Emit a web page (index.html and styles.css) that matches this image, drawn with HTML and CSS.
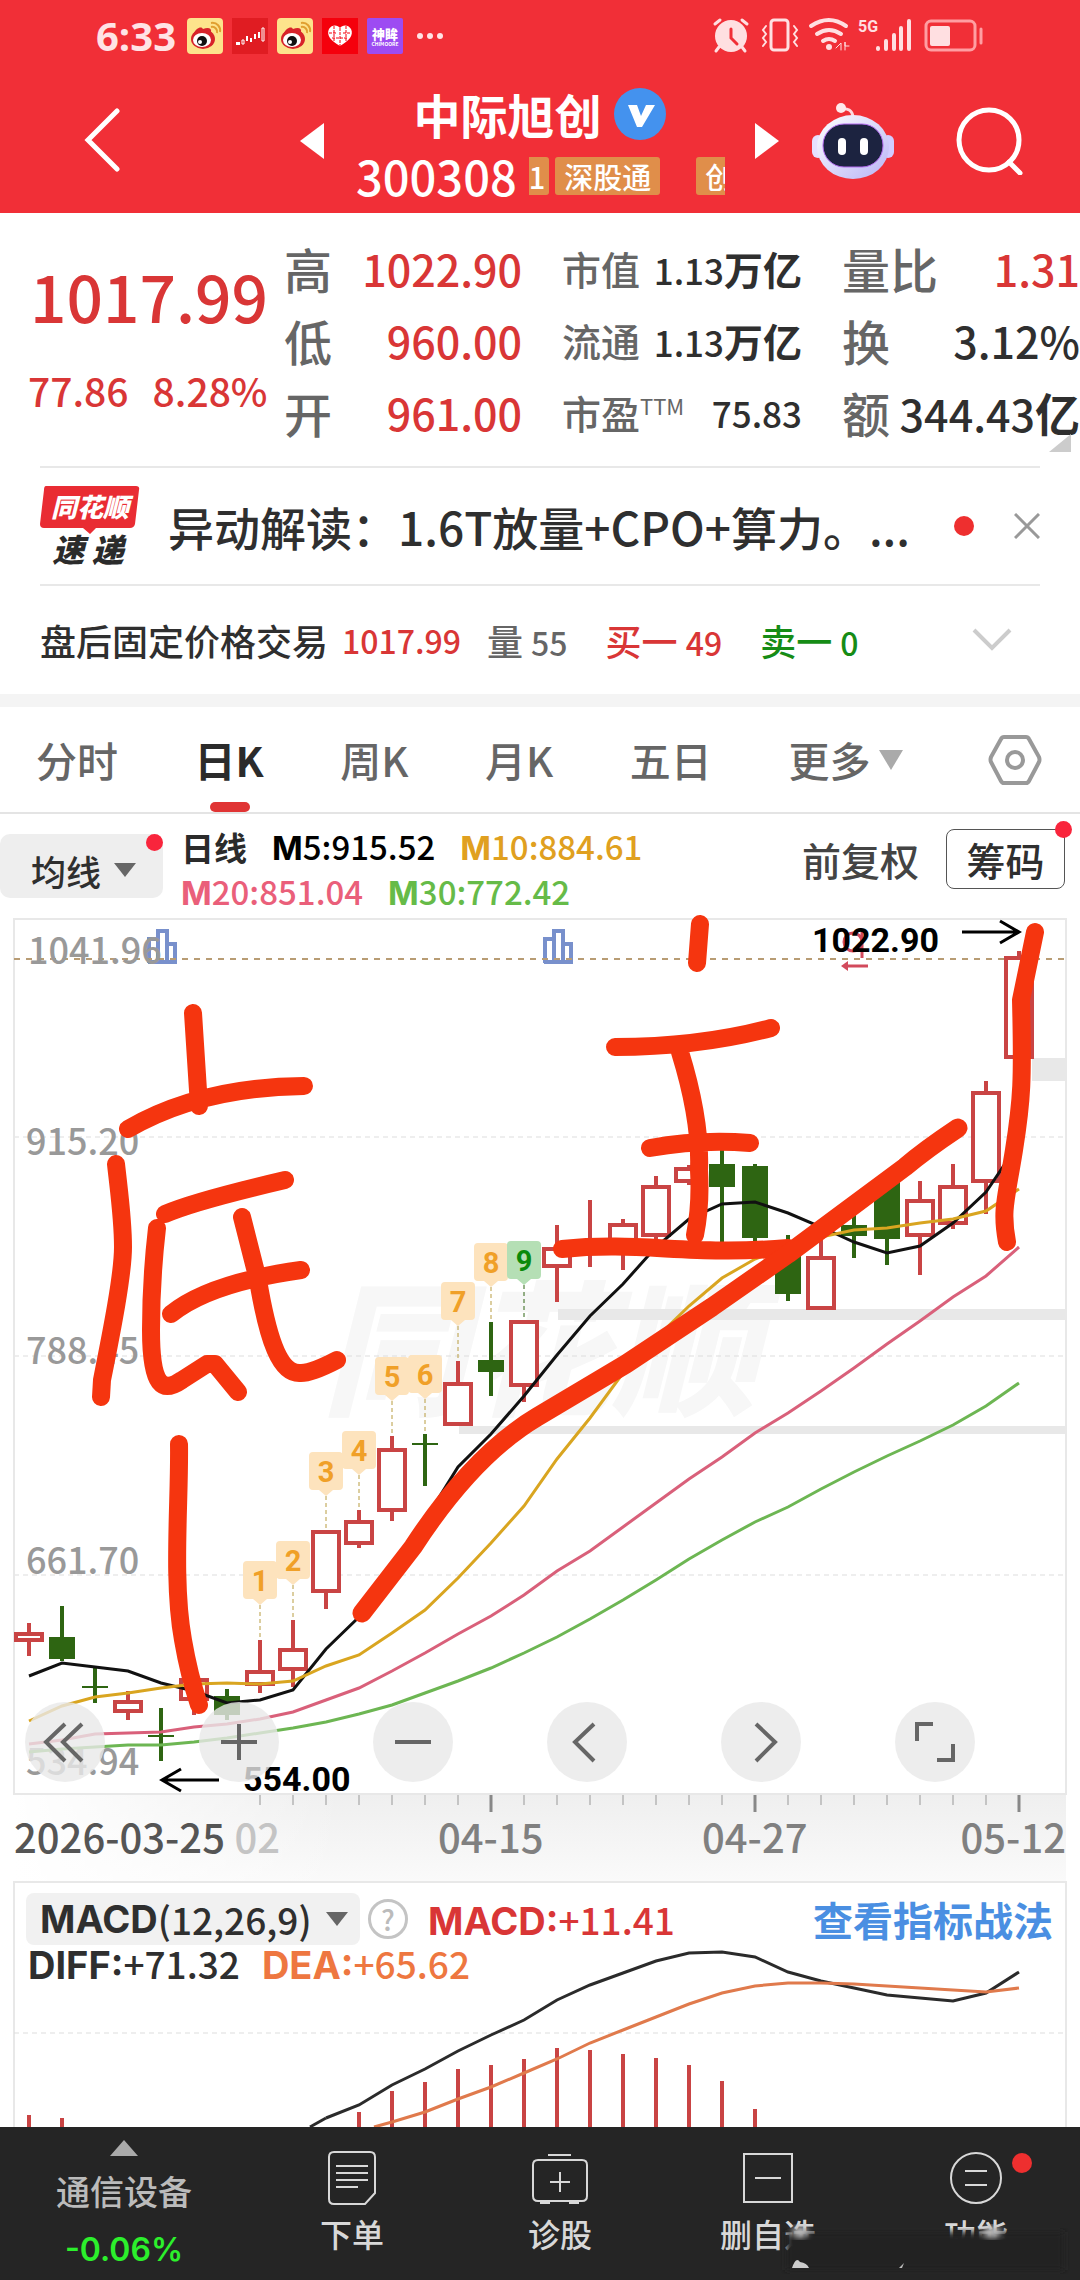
FILE: index.html
```html
<!DOCTYPE html>
<html lang="zh-CN">
<head>
<meta charset="utf-8">
<meta name="viewport" content="width=device-width, initial-scale=1">
<title>中际旭创 300308</title>
<link rel="stylesheet" href="styles.css">
</head>
<body>
<header class="top">
  <div class="status">
    <span class="clock">6:33</span>
    <div class="apps">
      <svg class="app" viewBox="0 0 36 36"><rect width="36" height="36" rx="4" fill="#fde38c"/><ellipse cx="16" cy="21" rx="12" ry="10" fill="#d8232a"/><path d="M6 17c3-8 9-9 10-6 5-2 9-1 8 3" fill="#d8232a"/><ellipse cx="15" cy="22" rx="9" ry="7" fill="#fff"/><circle cx="15" cy="23" r="5" fill="#111"/><circle cx="13" cy="24" r="2" fill="#fff"/><path d="M24 9c4-1 7 3 6 6M24 5c6-1 10 4 9 9" fill="none" stroke="#e0a030" stroke-width="2"/></svg>
      <svg class="app" viewBox="0 0 36 36"><rect width="36" height="36" fill="#e01c22"/><path d="M4 24h4v3H4zM14 18h2v5h-2zM18 20h2v4h-2zM22 16h2v5h-2zM26 14h2v6h-2z" fill="#fff"/><path d="M10 22h2v4h-2zM30 10h2v13h-2z" fill="none" stroke="#fff"/></svg>
      <svg class="app" viewBox="0 0 36 36"><rect width="36" height="36" rx="4" fill="#fde38c"/><ellipse cx="16" cy="21" rx="12" ry="10" fill="#d8232a"/><path d="M6 17c3-8 9-9 10-6 5-2 9-1 8 3" fill="#d8232a"/><ellipse cx="15" cy="22" rx="9" ry="7" fill="#fff"/><circle cx="15" cy="23" r="5" fill="#111"/><circle cx="13" cy="24" r="2" fill="#fff"/><path d="M24 9c4-1 7 3 6 6M24 5c6-1 10 4 9 9" fill="none" stroke="#e0a030" stroke-width="2"/></svg>
      <svg class="app" viewBox="0 0 36 36"><rect width="36" height="36" fill="#f5000c"/><path d="M18 28C9 23 4 17 7 11c3-5 9-4 11-1 2-3 8-4 11 1 3 6-2 12-11 17z" fill="#fff"/><path d="M18 10v18M12 8v15M24 8v15M7 15h8M21 15h8M10 20h16" stroke="#f5000c" stroke-width="1" stroke-dasharray="3 1"/></svg>
      <svg class="app" viewBox="0 0 36 36"><rect width="36" height="36" rx="2" fill="#9d4bf2"/><text x="18" y="21" text-anchor="middle" font-size="13" font-weight="900" fill="#fff">神眸</text><text x="18" y="28" text-anchor="middle" font-size="5" font-weight="700" fill="#fff">CHIMOORE</text></svg>
    </div>
    <svg class="dots" viewBox="0 0 26 6"><circle cx="3" cy="3" r="3"/><circle cx="13" cy="3" r="3"/><circle cx="23" cy="3" r="3"/></svg>
    <svg class="signals" viewBox="713 18 272 38" fill="none" stroke="#ffdfe1" stroke-width="3" stroke-linecap="round">
      <circle cx="731" cy="37" r="16" fill="#ffdfe1" stroke="none"/><path d="M731 30v9l6 6" stroke="#f12f37"/><path d="M715 25l5-4M742 21l5 4M719 48l-3 4M742 48l3 4"/>
      <rect x="771" y="21" width="17" height="30" rx="3"/><path d="M766 27l-3 4 3 4-3 4 3 4-3 4M794 27l3 4-3 4 3 4-3 4 3 4" stroke-width="2"/>
      <path d="M811 27q18-12 35 0M817 35q12-8 24 0M823 42q6-4 12 0" stroke-width="4"/><circle cx="829" cy="48" r="3" fill="#ffdfe1" stroke="none"/><path d="M836 49l5-5v7M849 47h-4v-4v8" stroke-width="1"/>
      <text x="858" y="33" class="net">5G</text>
      <path d="M878 49v1M886 42v8M894 36v14M901 29v21M909 22v28" stroke-width="4"/>
      <rect x="926" y="22" width="49" height="29" rx="5" stroke="#ff9ea2"/><rect x="930" y="27" width="20" height="20" rx="2" fill="#ffdfe1" stroke="none"/><path d="M981 30v14" stroke="#ff9ea2"/>
    </svg>
  </div>
  <div class="appbar">
    <button class="bare back" aria-label="返回"><svg viewBox="0 0 36 66"><path d="M33 3L4 32l29 29" fill="none" stroke="#fff" stroke-width="5" stroke-linecap="round"/></svg></button>
    <button class="bare prev" aria-label="上一只"><svg viewBox="0 0 24 36"><path d="M24 0v36L0 18z" fill="#fff"/></svg></button>
    <div class="stock">
      <h1>中际旭创 <svg class="vip" viewBox="0 0 52 52"><circle cx="26" cy="26" r="26" fill="#4492ee"/><path d="M14 17h9l4 11 5-11h9L28 39h-5z" fill="#fff"/></svg></h1>
      <div class="code"><span class="num">300308</span><span class="chips"><i class="chip cut">1</i><i class="chip">深股通</i><i class="chip last">创</i></span></div>
    </div>
    <button class="bare next" aria-label="下一只"><svg viewBox="0 0 24 36"><path d="M0 0v36l24-18z" fill="#fff"/></svg></button>
    <button class="bare bot" aria-label="助手"><svg viewBox="0 0 82 76">
      <defs><linearGradient id="shell" x1="0" y1="0" x2="1" y2="1"><stop offset="0" stop-color="#fff"/><stop offset="1" stop-color="#b9b4f5"/></linearGradient></defs>
      <path d="M28 6q12-2 13 8" fill="none" stroke="#ffd9e0" stroke-width="3"/><circle cx="29" cy="5" r="5" fill="#ffe9ec"/>
      <rect x="0" y="32" width="12" height="23" rx="6" fill="#e6e0ff"/><rect x="70" y="32" width="12" height="23" rx="6" fill="#d2ccff"/>
      <ellipse cx="41" cy="44" rx="36" ry="32" fill="url(#shell)"/><rect x="11" y="21" width="60" height="43" rx="21" fill="#1c2340" stroke="#b46bf0" stroke-width="1"/>
      <rect x="26" y="35" width="8" height="17" rx="4" fill="#fff"/><rect x="48" y="35" width="8" height="17" rx="4" fill="#fff"/></svg></button>
    <button class="bare find" aria-label="搜索"><svg viewBox="0 0 68 68"><circle cx="33" cy="33" r="30" fill="none" stroke="#fff" stroke-width="5"/><path d="M53 55l11 11" stroke="#fff" stroke-width="5" stroke-linecap="round"/></svg></button>
  </div>
</header>

<main>
  <section class="quote">
    <div class="price">
      <strong class="num">1017.99</strong>
      <div class="delta num"><span>77.86</span><span>8.28%</span></div>
    </div>
    <div class="fields">
      <dl class="big"><div><dt>高</dt><dd class="up">1022.90</dd></div><div><dt>低</dt><dd class="up">960.00</dd></div><div><dt>开</dt><dd class="up">961.00</dd></div></dl>
      <dl class="mid"><div><dt>市值</dt><dd>1.13<b>万亿</b></dd></div><div><dt>流通</dt><dd>1.13<b>万亿</b></dd></div><div><dt>市盈<sup>TTM</sup></dt><dd>75.83</dd></div></dl>
      <dl class="big wide"><div><dt>量比</dt><dd class="up">1.31</dd></div><div><dt>换</dt><dd>3.12%</dd></div><div><dt>额</dt><dd>344.43<b>亿</b></dd></div></dl>
    </div>
    <span class="corner"></span>
  </section>

  <section class="news">
    <svg class="flash" viewBox="41 485 100 80"><path d="M47 485h90q4 0 3 4l-4 34q-1 4-5 4H97l-6 6-7-6H45q-4 0-4-4l4-34q0-4 2-4z" fill="#e92c33"/><text x="91" y="516" text-anchor="middle" font-size="26" font-weight="900" font-style="italic" fill="#fff">同花顺</text><text x="89" y="561" text-anchor="middle" font-size="32" font-weight="900" font-style="italic" fill="#2b2b2b">速 递</text></svg>
    <a href="#">异动解读：1.6T放量+CPO+算力。...</a>
    <span class="dot"></span>
    <button class="bare close" aria-label="关闭"><svg viewBox="0 0 26 26"><path d="M1 1l24 24M25 1L1 25" stroke="#999" stroke-width="3"/></svg></button>
  </section>

  <section class="after">
    <span class="name">盘后固定价格交易</span><span class="up num">1017.99</span>
    <span class="vol">量 <span class="num">55</span></span><span class="up">买一 <span class="num">49</span></span><span class="down">卖一 <span class="num">0</span></span>
    <button class="bare more" aria-label="展开"><svg viewBox="0 0 40 24"><path d="M2 2l18 18L38 2" fill="none" stroke="#ccc" stroke-width="4"/></svg></button>
  </section>

  <nav class="tabs">
    <a href="#">分时</a><a href="#" class="on">日K</a><a href="#">周K</a><a href="#">月K</a><a href="#">五日</a><a href="#">更多<svg viewBox="0 0 24 20"><path d="M0 0h24L12 20z" fill="#aaa"/></svg></a>
    <button class="bare gear" aria-label="设置"><svg viewBox="0 0 54 52"><path d="M16 3h22q2 0 3 2l10 18q1 3 0 5L41 47q-1 2-3 2H16q-2 0-3-2L3 28q-1-2 0-5L13 5q1-2 3-2z" fill="none" stroke="#999" stroke-width="4"/><circle cx="27" cy="26" r="8" fill="none" stroke="#999" stroke-width="4"/></svg></button>
  </nav>

  <section class="legend">
    <button class="ma">均线<svg viewBox="0 0 22 14"><path d="M0 0h22L11 14z" fill="#666"/></svg><span class="badge"></span></button>
    <div class="values">
      <p><b class="cn">日线</b><span><b>M</b>5:915.52</span><span class="m10"><b>M</b>10:884.61</span></p>
      <p><span class="m20"><b>M</b>20:851.04</span><span class="m30"><b>M</b>30:772.42</span></p>
    </div>
    <button class="bare adj">前复权</button>
    <button class="chipbtn">筹码<span class="badge"></span></button>
  </section>

  <section class="kline">
    <svg class="plot" viewBox="0 918 1080 963">
      <defs>
        <linearGradient id="fadeY" x1="0" y1="0" x2="0" y2="1"><stop offset="0" stop-color="#efefef"/><stop offset="1" stop-color="#fafafa"/></linearGradient>
        <linearGradient id="fadeX"><stop offset="0" stop-color="#fff"/><stop offset="1" stop-color="#fff" stop-opacity="0"/></linearGradient>
      </defs>
      <text class="mark" x="322" y="1404">同花顺</text>
      <rect x="14" y="1795" width="1052" height="86" fill="url(#fadeY)"/>
      <rect x="14" y="1795" width="330" height="86" fill="url(#fadeX)"/>
      <g fill="#e8e8e8"><rect x="1032" y="1058" width="34" height="23"/><rect x="558" y="1309" width="508" height="11"/><rect x="459" y="1426" width="607" height="8"/></g>
      <path class="grid" d="M14 1137H1066M14 1356H1066M14 1575H1066"/>
      <rect class="frame" x="14" y="919" width="1052" height="875"/>
      <g fill="none" stroke="#7890cc" stroke-width="4"><path d="M148 962h27v-18h-8v-13h-9v8h-9v24M158 939v24M167 944v19"/><path d="M544 962h27v-18h-8v-13h-9v8h-9v24M554 939v24M563 944v19"/></g>
      <path d="M14 959H1066" stroke="#b89c74" stroke-width="2" stroke-dasharray="6 6"/>
      <g class="ylab"><text x="28" y="964">1041.96</text><text x="26" y="1155">915.20</text><text x="26" y="1364">788.45</text><text x="26" y="1574">661.70</text><text x="26" y="1775">534.94</text></g>
      <g id="flags"></g>
      <g id="candles"></g>
      <g id="averages"></g>
      <g fill="none" stroke="#d24a5c" stroke-width="3"><circle cx="853" cy="942" r="9"/><path d="M862 932v26M868 966h-22"/><path d="M841 966l7-5v10z" fill="#d24a5c" stroke="none"/></g>
      <g fill="none" stroke="#000" stroke-width="3"><path d="M962 932h57M1000 921l19 11-19 11"/><path d="M219 1780h-57M181 1769l-19 11 19 11"/></g>
      <g class="peak"><text x="812" y="952">1022.90</text><text x="243" y="1791">554.00</text></g>
      <g id="ticks"></g>
      <g class="dates"><text x="14" y="1853" fill="#555">2026-03-25</text><text x="280" y="1853" text-anchor="end" fill="#c4c4c4">02</text><text x="438" y="1853">04-15</text><text x="702" y="1853">04-27</text><text x="1066" y="1853" text-anchor="end">05-12</text></g>
    </svg>
    <div class="tools">
      <button aria-label="最早"><svg viewBox="0 0 80 80"><path d="M40 22L21 40l19 19M57 22L38 40l19 19"/></svg></button>
      <button aria-label="放大"><svg viewBox="0 0 80 80"><path d="M40 22v36M22 40h36"/></svg></button>
      <button aria-label="缩小"><svg viewBox="0 0 80 80"><path d="M22 40h36"/></svg></button>
      <button aria-label="左移"><svg viewBox="0 0 80 80"><path d="M47 22L28 40l19 19"/></svg></button>
      <button aria-label="右移"><svg viewBox="0 0 80 80"><path d="M35 22l19 18-19 19"/></svg></button>
      <button aria-label="全屏"><svg viewBox="0 0 80 80"><path d="M38 22H22v17M42 58h16V42"/></svg></button>
    </div>
    <svg class="plot ink" viewBox="0 918 1080 963">
      <path d="M193 1013L199 1106M128 1129Q200 1087 304 1086M116 1164C120 1200 123 1220 123 1247S112 1330 102 1380L101 1397M165 1214Q195 1201 285 1180M157 1228Q151 1280 151 1330C151 1388 163 1393 182 1380L207 1364H215L238 1392M171 1314Q209 1283 301 1270M242 1217L258 1280C268 1340 280 1375 301 1373Q312 1373 337 1360M179 1444C180 1500 172 1580 183 1640Q189 1675 199 1705"/>
      <path d="M700 924L697 963M615 1047Q700 1047 771 1028M680 1052Q701 1120 699 1170Q701 1205 695 1235M650 1148Q700 1139 750 1143M562 1249C640 1241 690 1256 788 1248"/>
      <path d="M1035 932L1021 1000C1023 1080 1022 1100 1014 1150S1001 1210 1007 1242"/>
      <path class="trend" d="M362 1613L413 1547C450 1490 490 1445 537 1417L626 1364L712 1307L788 1254L850 1208L905 1167Q925 1150 958 1128"/>
    </svg>
  </section>

  <section class="macd">
    <svg class="plot" viewBox="0 1881 1080 246">
      <path class="edge" d="M14 2127V1882H1066V2127"/>
      <path class="grid" d="M14 2033H1066"/>
      <g id="bars"></g><g id="osc"></g>
    </svg>
    <div class="head">
      <div class="line"><button class="pick"><b>MACD</b>(12,26,9)<svg viewBox="0 0 22 14"><path d="M0 0h22L11 14z" fill="#666"/></svg></button><button class="bare help">?</button><span class="up"><b>MACD:</b>+11.41</span><a href="#">查看指标战法</a></div>
      <div class="line two"><span><b>DIFF:</b>+71.32</span><span class="dea"><b>DEA:</b>+65.62</span></div>
    </div>
  </section>
</main>

<footer class="dock">
  <a href="#" class="sector"><svg viewBox="0 0 28 16"><path d="M14 0l14 16H0z" fill="#aaa"/></svg><span>通信设备</span><b>-0.06%</b></a>
  <a href="#"><svg viewBox="0 0 56 56"><path d="M10 2h36q5 0 5 5v36L41 54H10q-5 0-5-5V7q0-5 5-5zM12 16h32M12 23h32M12 30h32M12 37h22"/></svg>下单</a>
  <a href="#"><svg viewBox="0 0 56 56"><path d="M16 5h23M6 10h44q5 0 5 5v31q0 5-5 5H6q-5 0-5-5V15q0-5 5-5zM28 22v20M18 32h20M8 53h10M37 53h10"/></svg>诊股</a>
  <a href="#"><svg viewBox="0 0 56 56"><path d="M4 4h48v48H4zM15 28h26"/></svg>删自选</a>
  <a href="#"><svg viewBox="0 0 56 56"><circle cx="28" cy="28" r="25"/><path d="M17 21h22M17 35h22"/></svg>功能<span class="dot"></span></a>
  <svg class="smudge" viewBox="780 2222 290 54">
    <defs><filter id="soft"><feGaussianBlur stdDeviation="3"/></filter></defs>
    <path d="M786 2232H1064V2270H786z" fill="#232323" filter="url(#soft)"/>
    <g fill="#bbb" filter="url(#soft)"><ellipse cx="800" cy="2232" rx="8" ry="6"/><ellipse cx="992" cy="2232" rx="9" ry="6"/></g>
    <path d="M792 2268q4-12 8-6 7 1 9 6z" fill="#ccc"/><path d="M899 2268l5-5-2 5z" fill="#bbb"/>
  </svg>
</footer>
<script src="app.js"></script>
</body>
</html>
```
FILE: styles.css
```css
* { box-sizing: border-box; margin: 0; }
body { min-height: 100vh; display: flex; flex-direction: column; background: #fff; color: #2f2f2f; font-family: "Noto Sans CJK SC", sans-serif; font-weight: 500; overflow-x: hidden; }
main { flex: 1; }
a { color: inherit; text-decoration: none; }
button { font: inherit; color: inherit; border: 0; padding: 0; position: relative; }
svg { display: block; }
.bare { background: none; }
.up { color: #d93636; }
.down { color: #168c16; }
.dot { width: 20px; height: 20px; border-radius: 50%; background: #ee2f2f; flex: none; }
.badge { position: absolute; top: 0; right: 0; width: 17px; height: 17px; border-radius: 50%; background: #f9253c; }

.top { background: #f12f37; color: #fff; padding-bottom: 1px; }
.status { display: flex; align-items: center; padding: 18px 95px 0 96px; height: 54px; }
.clock { font: 700 40px/36px "Open Sans", sans-serif; color: #ffe3e5; width: 91px; }
.apps { display: flex; gap: 9px; }
.app { width: 36px; height: 36px; }
.dots { width: 26px; margin-left: 14px; fill: #ffe3e5; }
.signals { width: 272px; margin-left: auto; overflow: visible; }
.net { font: 700 16px Roboto, sans-serif; fill: #ffdfe1; stroke: none; }
.appbar { display: flex; align-items: center; height: 158px; padding: 16px 56px 0 84px; }
.back { width: 36px; margin-right: 180px; }
.prev, .next { width: 24px; }
.prev { margin-right: 32px; }
.next { margin: 0 33px 0 30px; }
.stock { flex: 1; min-width: 0; padding-top: 8px; }
.stock h1 { display: flex; justify-content: center; align-items: center; gap: 12px; font-size: 47px; line-height: 54px; font-weight: 700; padding: 0 28px 0 26px; }
.vip { width: 52px; }
.code { display: flex; align-items: center; gap: 12px; font-size: 47px; line-height: 54px; margin-top: 8px; }
.chips { display: flex; flex: 1; gap: 6px; overflow: hidden; font-size: 29px; line-height: 38px; }
.chip { font-style: normal; background: #e08e4a; border-radius: 3px; padding: 0 9px; flex: none; }
.cut { padding: 0 4px 0 0; border-radius: 0 3px 3px 0; }
.last { margin-left: 30px; }
.bot { width: 82px; margin-right: 62px; }
.find { width: 68px; }

.quote { display: grid; grid-template-columns: 1fr auto; padding: 19px 0 18px 28px; position: relative; }
.price { color: #d93636; padding-top: 27px; white-space: nowrap; }
.price strong { display: block; font-weight: 500; font-size: 64px; line-height: 72px; padding-left: 2px; }
.delta { display: flex; gap: 24px; font-size: 39px; line-height: 48px; margin-top: 35px; }
.fields { display: flex; gap: 40px; }
dl div { display: flex; justify-content: space-between; align-items: center; height: 72px; white-space: nowrap; }
.big { width: 238px; font-size: 48px; }
.big dd { font-size: 43px; }
.big dd b { font-size: 45px; }
.mid { width: 240px; font-size: 39px; }
.mid dd { font-size: 35px; }
.mid dd b { font-size: 39px; }
.wide { width: 238px; }
dt { color: #666; }
dd b { font-weight: 700; }
sup { font-size: 22px; font-weight: 400; line-height: 1; }
.corner { position: absolute; right: 9px; bottom: 14px; width: 22px; height: 18px; background: #ccc; clip-path: polygon(100% 0, 100% 100%, 0 100%); }

.news { display: flex; align-items: center; height: 120px; margin: 0 40px; border-top: 2px solid #e8e8e8; border-bottom: 2px solid #e8e8e8; }
.flash { width: 100px; flex: none; }
.news a { flex: 1; font-size: 46px; margin-left: 28px; white-space: nowrap; overflow: hidden; }
.close { width: 26px; margin-left: 40px; }
.after { display: flex; align-items: center; height: 108px; padding: 0 68px 0 40px; font-size: 36px; white-space: nowrap; }
.after .num { font-size: 32px; }
.name { margin-right: 14px; }
.vol { color: #666; margin: 0 38px 0 26px; }
.down { margin-left: 38px; }
.more { width: 40px; margin-left: auto; }

.tabs { display: flex; align-items: center; height: 120px; border-top: 13px solid #f4f4f4; border-bottom: 2px solid #e4e4e4; padding: 0 38px 0 36px; font-size: 41px; line-height: 105px; color: #666; justify-content: space-between; }
.tabs a { display: flex; align-items: center; gap: 9px; }
.tabs a svg { width: 24px; }
.tabs .on { color: #2b2b2b; font-weight: 700; position: relative; }
.on::after { content: ""; position: absolute; left: 15px; bottom: 0; width: 40px; height: 10px; border-radius: 5px; background: #e03434; }
.gear { width: 54px; margin-left: 8px; }

.legend { display: flex; align-items: center; height: 104px; padding-right: 15px; }
.ma { display: flex; align-items: center; gap: 13px; width: 163px; height: 64px; padding-left: 31px; padding-top: 8px; border-radius: 10px; background: #eee; font-size: 35px; }
.ma svg { width: 22px; }
.values { margin-left: 18px; font-size: 33px; flex: 1; margin-top: 7px; color: #000; white-space: nowrap; }
.values p { display: flex; align-items: center; gap: 25px; height: 45px; line-height: 45px; }
.values b { font-family: Inter, sans-serif; font-size: 33px; }
.values .cn { font-family: "Noto Sans CJK SC", sans-serif; color: #2b2b2b; }
.values .m10 { color: #e0a020; }
.values .m20 { color: #ea5f7a; }
.values .m30 { color: #66bb48; }
.adj { font-size: 39px; margin-right: 27px; color: #444; margin-top: -14px; }
.chipbtn { width: 119px; height: 60px; border: 1px solid #555; border-radius: 8px; background: #fff; font-size: 39px; line-height: 56px; margin-top: -14px; }
.chipbtn .badge { top: -9px; right: -8px; }

.kline, .macd { display: grid; }
.kline > *, .macd > * { grid-area: 1 / 1; }
.plot { width: 100%; overflow: visible; }
.frame, .edge { fill: none; stroke: #e8e8e8; stroke-width: 2; }
.grid { stroke: #ddd; stroke-width: 1; stroke-dasharray: 5 4; }
.mark { font-size: 145px; font-weight: 900; font-style: italic; fill: #f7f7f7; }
.ylab { font-size: 36px; fill: #999; }
.dates { font-size: 40px; fill: #808080; }
.peak { font: 700 34px Roboto, sans-serif; }
.flag { font: 700 29px Roboto, sans-serif; text-anchor: middle; }
.tools { align-self: end; display: flex; gap: 94px; padding: 0 0 99px 25px; z-index: 1; }
.tools button { width: 80px; height: 80px; border-radius: 50%; background: rgba(232, 232, 232, .8); }
.tools svg { fill: none; stroke: #666; stroke-width: 4; }
.ink { z-index: 2; pointer-events: none; fill: none; stroke: #f5350f; stroke-width: 18; stroke-linecap: round; stroke-linejoin: round; }
.trend { stroke-width: 19; }

.head { padding: 12px 27px 0 26px; font-size: 37px; }
.line { display: flex; align-items: center; height: 52px; }
.line b { font-family: Inter, sans-serif; font-size: 38px; font-weight: 700; }
.pick { display: flex; align-items: center; height: 52px; width: 334px; padding-left: 14px; border-radius: 8px; background: #f1f1f1; }
.pick svg { width: 22px; margin-left: 14px; }
.help { width: 40px; height: 40px; margin: 0 20px 0 8px; border: 3px solid #c4c4c4; border-radius: 50%; color: #bbb; font-size: 28px; line-height: 34px; }
.line a { margin-left: auto; font-size: 40px; line-height: 52px; font-weight: 700; color: #4a8fe2; }
.two { gap: 22px; padding-left: 2px; height: 36px; }
.dea { color: #ee7740; }

.dock { position: relative; display: grid; grid-template-columns: 248fr 208fr 208fr 208fr 208fr; height: 153px; background: #252525; color: #d8d8d8; font-size: 32px; }
.dock a { position: relative; display: flex; flex-direction: column; align-items: center; padding-top: 23px; line-height: 54px; }
.dock a svg { width: 56px; fill: none; stroke: #d8d8d8; stroke-width: 2; }
.dock .sector { padding-top: 13px; font-size: 34px; color: #bbb; }
.dock .sector svg { width: 28px; stroke: none; margin-bottom: 8px; }
.sector b { font: 600 32px/64px Inter, sans-serif; color: #2cf02c; }
.dock .dot { position: absolute; top: 26px; right: 48px; }
.smudge { position: absolute; right: 10px; bottom: 4px; width: 290px; }
```
FILE: app.js
```js
const NS = "http://www.w3.org/2000/svg";
const RED = "#c94444", GREEN = "#2e6512";
const px = i => 29 + i * 33;
function add(parent, tag, attrs, text) {
  const el = document.createElementNS(NS, tag);
  for (const k in attrs) el.setAttribute(k, attrs[k]);
  if (text) el.textContent = text;
  document.getElementById(parent).appendChild(el);
}
// direction, high, body top, body bottom, low
const candles = [
  [1,1623,1634,1640,1656],[0,1606,1637,1659,1661],[0,1667,1686,1688,1703],[1,1691,1702,1711,1720],
  [0,1708,1735,1737,1761],[1,1679,1680,1699,1715],[0,1689,1696,1715,1720],[1,1640,1672,1684,1693],
  [1,1620,1650,1669,1687],[1,1531,1532,1591,1609],[1,1510,1522,1543,1548],[1,1436,1450,1510,1521],
  [0,1434,1443,1445,1486],[1,1361,1384,1424,1426],[0,1322,1360,1372,1396],[1,1321,1322,1385,1402],
  [1,1225,1249,1266,1302],[1,1200,1247,1250,1267],[1,1219,1225,1247,1270],[1,1176,1187,1235,1240],
  [1,1165,1169,1181,1185],[0,1150,1164,1187,1243],[0,1164,1166,1238,1243],[0,1235,1250,1294,1301],
  [1,1238,1258,1308,1308],[0,1213,1225,1236,1258],[0,1182,1182,1239,1265],[1,1181,1201,1235,1275],
  [1,1164,1187,1223,1229],[1,1081,1093,1181,1214],[1,951,958,1057,1057]
];
candles.forEach(([up, hi, top, bot, lo], i) => {
  const x = px(i), c = up ? RED : GREEN;
  add("candles", "path", { d: `M${x} ${hi}V${top}M${x} ${bot}V${lo}`, stroke: c, "stroke-width": 4 });
  add("candles", "rect", up
    ? { x: x - 13, y: top, width: 26, height: bot - top, fill: "#fff", stroke: c, "stroke-width": 4 }
    : { x: x - 13, y: top, width: 26, height: bot - top, fill: c });
});
function line(parent, color, ys, from = 0) {
  add(parent, "polyline", { points: ys.map((y, i) => `${px(from + i)},${y}`).join(" "), fill: "none", stroke: color, "stroke-width": 3 });
}
line("averages", "#111", [1676,1663,1667,1671,1683,1691,1703,1700,1690,1649,1617,1580,1520,1467,1434,1396,1355,1316,1284,1247,1219,1204,1202,1213,1227,1242,1253,1246,1223,1192,1143]);
line("averages", "#d9a520", [1721,1706,1697,1693,1688,1684,1683,1684,1681,1666,1655,1633,1610,1578,1543,1506,1459,1418,1373,1338,1306,1278,1259,1247,1237,1230,1228,1223,1219,1211,1189]);
line("averages", "#d9607a", [1744,1740,1734,1733,1732,1727,1724,1719,1712,1700,1688,1671,1653,1634,1616,1595,1571,1551,1527,1503,1479,1457,1433,1413,1391,1368,1344,1321,1297,1276,1247]);
line("averages", "#6db653", [1752,1749,1747,1745,1745,1742,1738,1733,1728,1722,1714,1705,1693,1681,1668,1653,1637,1619,1600,1580,1559,1540,1522,1507,1489,1472,1456,1441,1425,1406,1383]);
// nine-count flags above the candles
[1561,1541,1452,1431,1357,1355,1282,1243,1241].forEach((y, n) => {
  const x = px(n + 7), last = n === 8;
  add("flags", "path", { d: `M${x} ${y + 44}V${candles[n + 7][1]}`, stroke: last ? "#2e6512" : "#b89c40", "stroke-dasharray": "4 3" });
  add("flags", "path", { d: `M${x - 13} ${y}h26q4 0 4 4v30q0 4-4 4h-6l-7 6-7-6h-6q-4 0-4-4v-30q0-4 4-4z`, fill: last ? "#b5dfb5" : "#fde3bd" });
  add("flags", "text", { x, y: y + 30, class: "flag", fill: last ? "#0a8a0a" : "#f0a028" }, String(n + 1));
});
for (let i = 7; i < 31; i++) {
  const major = i % 8 === 6;
  add("ticks", "path", { d: `M${px(i)} 1795v${major ? 17 : 10}`, stroke: major ? "#888" : "#c4c4c4", "stroke-width": major ? 3 : 2 });
}
line("osc", "#2b2b2b", [2118,2105,2085,2069,2051,2035,2020,2000,1985,1973,1961,1953,1952,1957,1972,1981,1988,1995,1998,2001,1993,1972], 9);
line("osc", "#e07a4c", [2122,2112,2099,2087,2073,2059,2043,2030,2017,2004,1993,1986,1983,1983,1984,1986,1988,1990,1992,1988], 11);
add("osc", "path", { d: "M310 2127L326 2118", stroke: "#2b2b2b", "stroke-width": 3 });
add("osc", "path", { d: "M374 2127L392 2122", stroke: "#e07a4c", "stroke-width": 3 });
const bars = { 0: 2115, 1: 2118, 10: 2112, 11: 2091, 12: 2082, 13: 2069, 14: 2065, 15: 2059, 16: 2048, 17: 2050, 18: 2054, 19: 2058, 20: 2065, 21: 2081, 22: 2109 };
for (const i in bars) add("bars", "path", { d: `M${px(+i)} ${bars[i]}V2127`, stroke: "#c94444", "stroke-width": 4 });
```
